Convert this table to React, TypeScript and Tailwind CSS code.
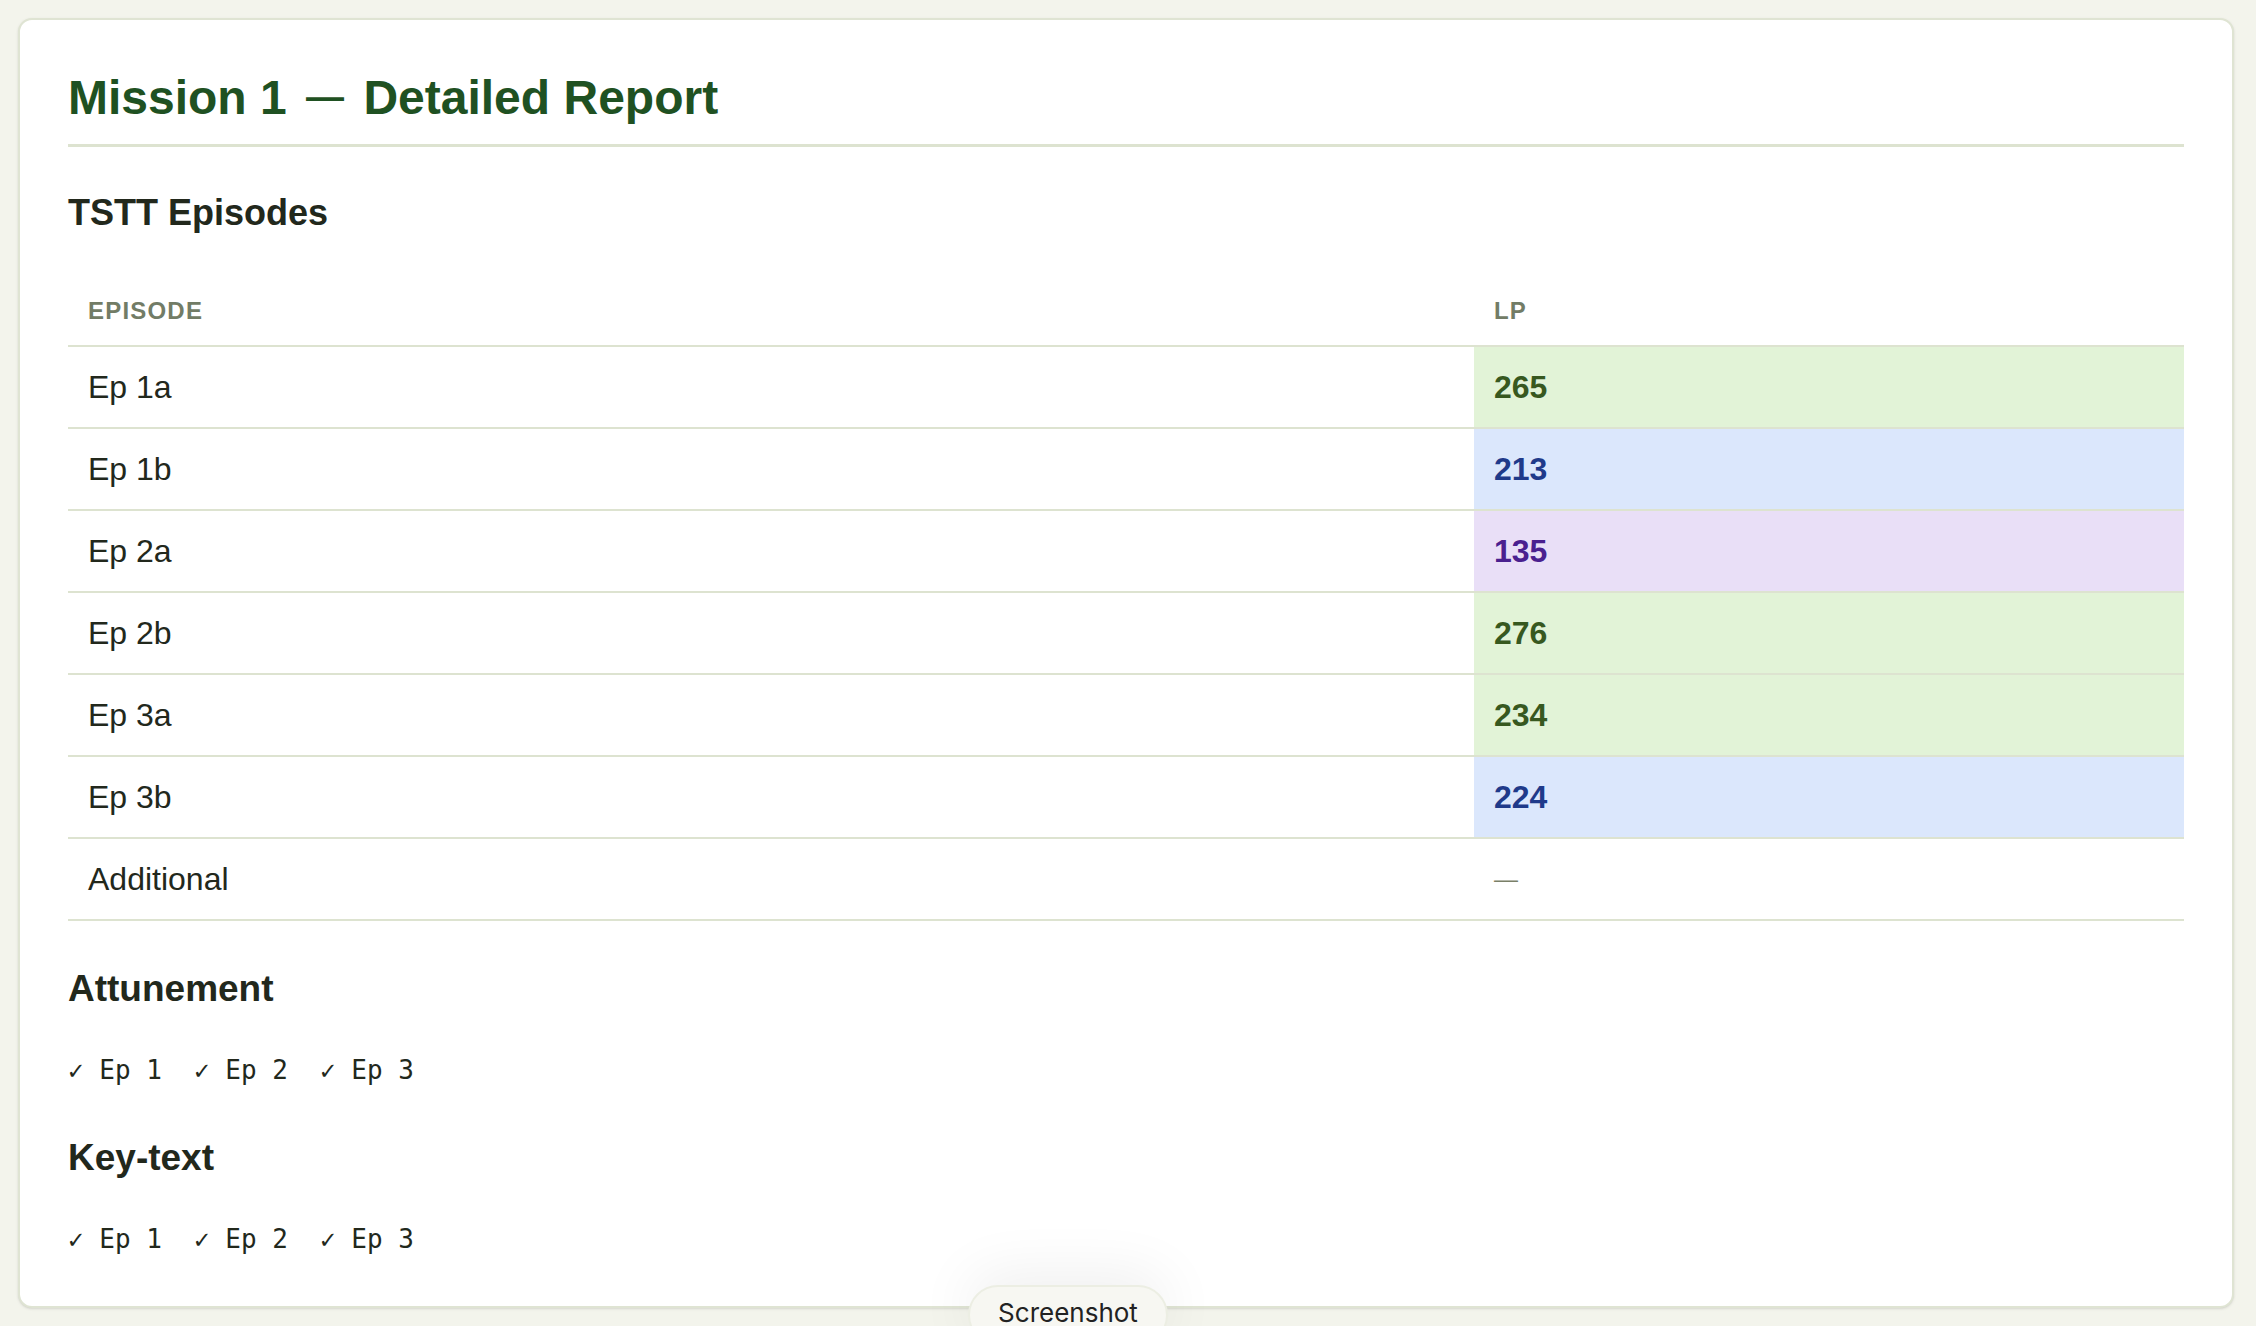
import React from "react";

type Episode = {
  name: string;
  lp: number | null;
  tone?: "green" | "blue" | "purple";
};

const episodes: Episode[] = [
  { name: "Ep 1a", lp: 265, tone: "green" },
  { name: "Ep 1b", lp: 213, tone: "blue" },
  { name: "Ep 2a", lp: 135, tone: "purple" },
  { name: "Ep 2b", lp: 276, tone: "green" },
  { name: "Ep 3a", lp: 234, tone: "green" },
  { name: "Ep 3b", lp: 224, tone: "blue" },
  { name: "Additional", lp: null },
];

const toneClass = {
  green: "bg-[#e2f3d7] text-[#37581f]",
  blue: "bg-[#dbe7fc] text-[#1f3a8a]",
  purple: "bg-[#e9dff7] text-[#4a208f]",
};

const sans = { fontFamily: '"Liberation Sans", Arial, sans-serif' };
const mono = { fontFamily: '"DejaVu Sans Mono", "Liberation Mono", monospace' };

function CheckList() {
  return (
    <div className="mt-[39px] flex text-[26px] leading-[40px] text-[#22281c]" style={mono}>
      {["Ep 1", "Ep 2", "Ep 3"].map(ep => (
        <span key={ep} className="w-[126px] whitespace-pre">{`✓ ${ep}`}</span>
      ))}
    </div>
  );
}

export default function App() {
  return (
    <div className="relative min-h-screen bg-[#f3f4ec] py-[18px] pl-[18px] pr-[22px]" style={sans}>
      <div className="rounded-[14px] border-2 border-[#dfe4d3] bg-white p-[48px] pb-[47px] shadow-sm">
        <h1 className="h-[79px] border-b-[3px] border-[#dde3d0] pb-[16px] text-[48px] font-bold leading-[60px] text-[#1f5122]">
          Mission 1 <span className="mx-[6px] align-[4px] text-[38px] leading-none">—</span> Detailed Report
        </h1>

        <h2 className="mt-[44px] mb-[38px] text-[36px] font-bold leading-[44px] text-[#22281c]">TSTT Episodes</h2>

        <table className="w-full table-fixed border-collapse text-left">
          <thead>
            <tr className="border-b-2 border-[#dde3d0]">
              <th className="w-[1406px] px-[20px] pt-[20px] pb-[16px] text-[24px] font-bold uppercase leading-[36px] tracking-[0.05em] text-[#727c66]">
                Episode
              </th>
              <th className="px-[20px] pt-[20px] pb-[16px] text-[24px] font-bold uppercase leading-[36px] tracking-[0.05em] text-[#727c66]">
                LP
              </th>
            </tr>
          </thead>
          <tbody>
            {episodes.map(ep => (
              <tr key={ep.name} className="border-b-2 border-[#dde3d0]">
                <td className="px-[20px] py-[20px] text-[32px] leading-[40px] text-[#22281c]">{ep.name}</td>
                {ep.lp === null ? (
                  <td className="px-[20px] py-[20px] text-[24px] leading-[40px] text-[#7a8068]">—</td>
                ) : (
                  <td className={`px-[20px] py-[20px] text-[32px] font-bold leading-[40px] ${toneClass[ep.tone ?? "green"]}`}>
                    {ep.lp}
                  </td>
                )}
              </tr>
            ))}
          </tbody>
        </table>

        <h3 className="mt-[46px] text-[37px] font-bold leading-[44px] text-[#22281c]">Attunement</h3>
        <CheckList />

        <h3 className="mt-[46px] text-[37px] font-bold leading-[44px] text-[#22281c]">Key-text</h3>
        <CheckList />
      </div>

      <div
        className="absolute left-[968px] top-[1285px] flex h-[60px] w-[200px] justify-center rounded-full border-2 border-[#eceee3] bg-[#f7f7f2] pt-[8px] text-[26px] leading-[36px] text-[#222222] shadow-[0_-10px_60px_rgba(0,0,0,0.07)]"
        style={{ fontFamily: 'Inter, "Noto Sans", sans-serif' }}
      >
        Screenshot
      </div>
    </div>
  );
}
